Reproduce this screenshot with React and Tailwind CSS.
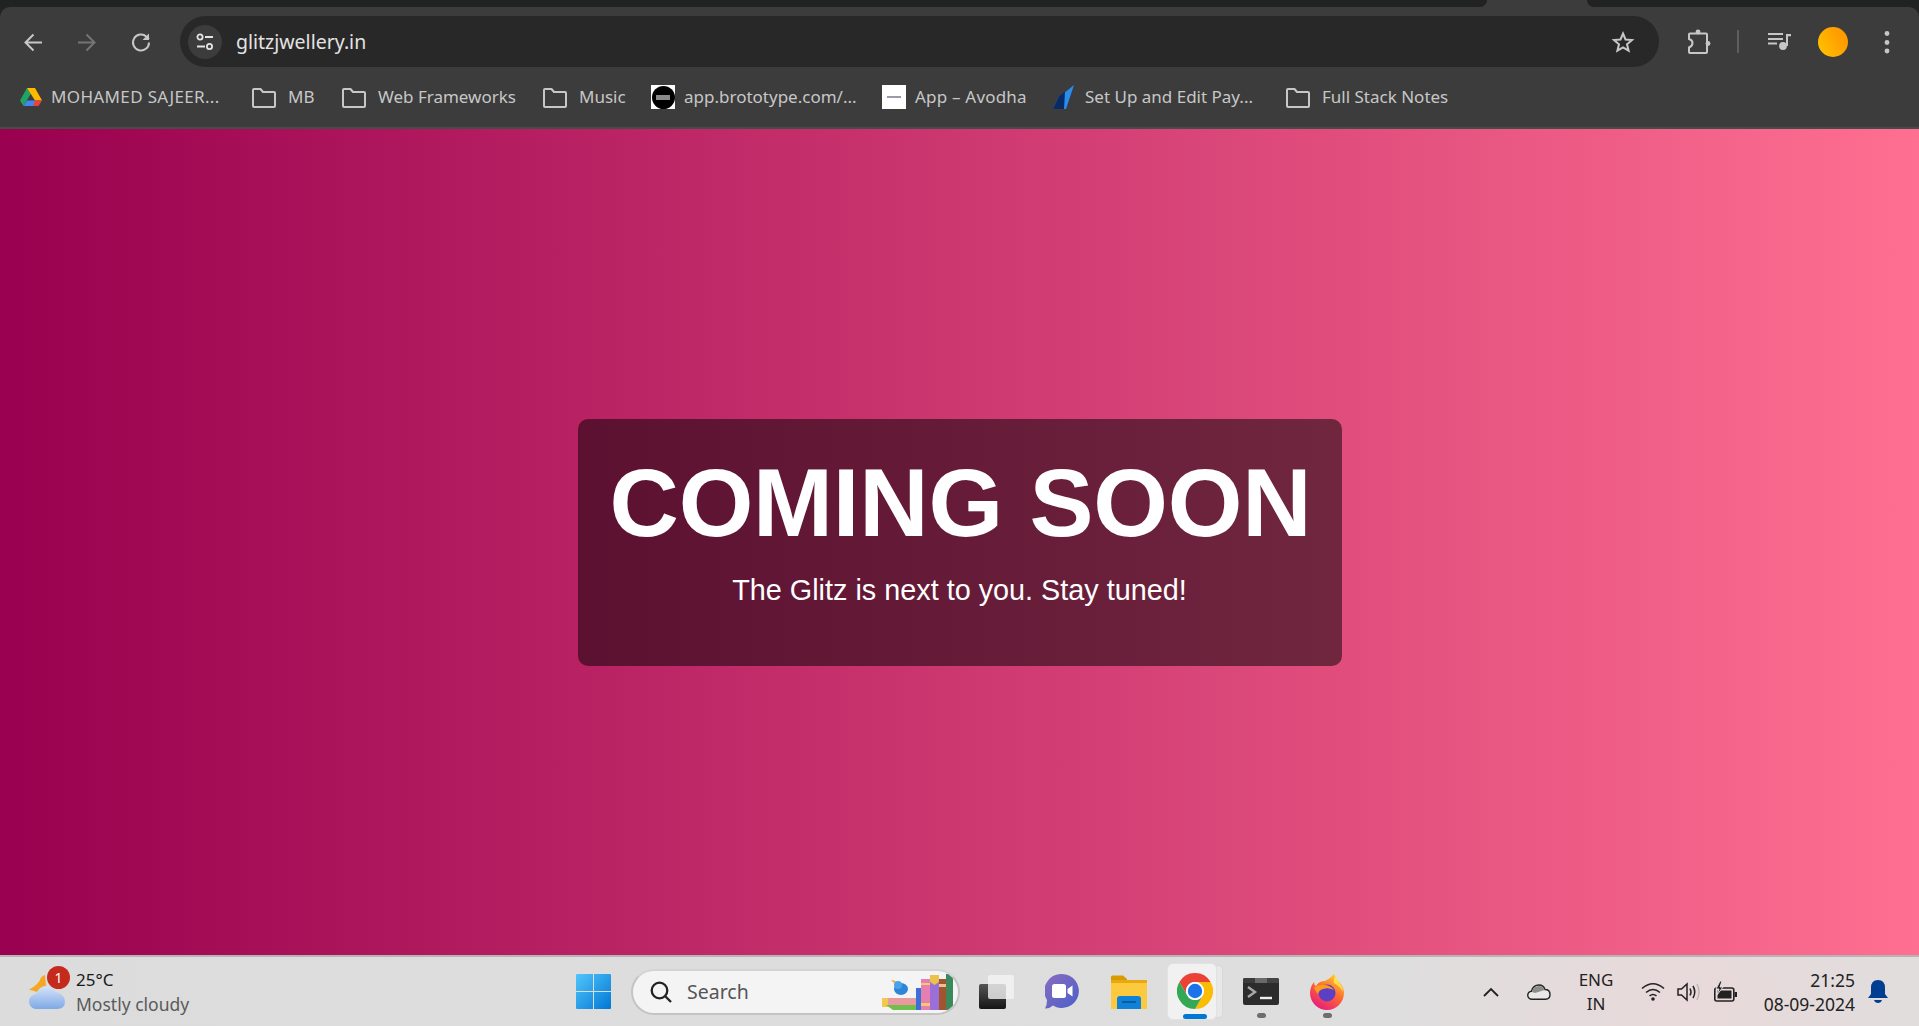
import React from "react";

const ui = "font-['Noto_Sans',sans-serif]";

const Folder = () => (
  <svg width="24" height="24" viewBox="0 0 24 24" fill="none" stroke="#c7c7c7" strokeWidth="2" strokeLinejoin="round" className="shrink-0">
    <path d="M1 5a1 1 0 0 1 1-1h6.500l2.500 3h11a1 1 0 0 1 1 1v13a1 1 0 0 1-1 1H2a1 1 0 0 1-1-1z" />
  </svg>
);

const Drive = () => (
  <svg width="24" height="24" viewBox="0 0 24 24" className="shrink-0">
    <path d="M8 3 1 15.500 4.500 21 12 8.500z" fill="#1fa463" />
    <path d="M8 3h8l7 12.500h-7z" fill="#ffba00" />
    <path d="M4.500 21 8 15.500h10L15 21z" fill="#4285f4" />
    <path d="M16 15.500h7L19.500 21H14z" fill="#ea4335" />
  </svg>
);

const Bookmark = ({ icon, label, w, className, textClass = "" }) => (
  <div className={`flex items-center shrink-0 ${className}`}>
    {icon}
    <span className={`text-[17px] text-[#c7c7c7] whitespace-nowrap ${textClass} ${ui}`} style={{ width: w }}>{label}</span>
  </div>
);

function Toolbar() {
  return (
    <div className="h-[122px] bg-[#3c3c3c] rounded-t-[10px] flex flex-col border-b-2 border-[#4a4a4a] shrink-0">
      <div className="flex items-center pt-[9px] h-[60px] shrink-0">
        <svg width="24" height="24" viewBox="0 0 24 24" fill="none" stroke="#c7c7c7" strokeWidth="2" className="ml-[21px] shrink-0"><path d="M21 12.500H4.500M12.500 4.500l-8 8 8 8" /></svg>
        <svg width="24" height="24" viewBox="0 0 24 24" fill="none" stroke="#757575" strokeWidth="2" className="ml-[30px] shrink-0"><path d="M3 12.500h16.500M11.500 4.500l8 8-8 8" /></svg>
        <svg width="24" height="24" viewBox="0 0 24 24" fill="none" stroke="#c7c7c7" strokeWidth="2" className="ml-[30px] shrink-0"><path d="M20 12.500a8 8 0 1 1-2.500-5.800L20 9" /><path d="M20 3.500V10h-6.500" fill="#c7c7c7" stroke="none" /></svg>
        <div className="ml-[27px] w-[1479px] h-[51px] rounded-full bg-[#282828] flex items-center pl-2 pr-6 shrink-0">
          <div className="w-[34px] h-[34px] rounded-full bg-[#3c3c3c] flex items-center justify-center shrink-0">
            <svg width="20" height="20" viewBox="0 0 20 20" fill="none" stroke="#e3e3e3" strokeWidth="1.800">
              <circle cx="5" cy="5" r="2.600" /><path d="M10 5h8M2 14.500h8" /><circle cx="14.500" cy="14.500" r="2.600" />
            </svg>
          </div>
          <span className={`ml-[14px] pt-[1px] text-[19.500px] text-[#e3e3e3] ${ui}`}>glitzjwellery.in</span>
          <svg width="24" height="24" viewBox="0 0 24 24" fill="none" stroke="#c7c7c7" strokeWidth="2" strokeLinejoin="miter" className="ml-auto"><path d="M12 3.500l2.500 6 6.500.5-5 4.300 1.600 6.400L12 17.300 6.400 20.700 8 14.300 3 10l6.500-.5z" /></svg>
        </div>
        <svg width="24" height="26" viewBox="0 0 24 26" fill="none" stroke="#c7c7c7" strokeWidth="2" className="ml-[28px] shrink-0">
          <path d="M2 5.500a1 1 0 0 1 1-1h16a1 1 0 0 1 1 1V23a1 1 0 0 1-1 1H3a1 1 0 0 1-1-1v-4.500q3.500-1.500 3.500-4.500T2 10z" />
          <circle cx="11" cy="3" r="2.400" fill="#c7c7c7" stroke="none" /><circle cx="21" cy="14.500" r="2.400" fill="#c7c7c7" stroke="none" />
        </svg>
        <div className="ml-[26px] w-[2px] h-[23px] bg-[#5e5e5e] shrink-0" />
        <svg width="24" height="24" viewBox="0 0 24 24" fill="#c7c7c7" className="ml-[28px] shrink-0">
          <path d="M1 3h15v2H1zM1 8h15v2H1zM1 12.500h9v2H1zM19 4h5v2.200h-3V16h-2z" /><circle cx="16" cy="16" r="3.900" />
        </svg>
        <div className="ml-[27px] w-[30px] h-[30px] rounded-full bg-[linear-gradient(240deg,#ff9500,#ffa000_35%,#ffc800)] shrink-0" />
        <svg width="24" height="24" viewBox="0 0 24 24" fill="#c7c7c7" className="ml-[27px] shrink-0"><circle cx="12" cy="3.500" r="2.400" /><circle cx="12" cy="12.500" r="2.400" /><circle cx="12" cy="21" r="2.400" /></svg>
      </div>
      <div className="flex items-center flex-1 pl-[19px]">
        <Bookmark icon={<Drive />} label="MOHAMED SAJEER..." w={167} className="gap-[8px]" textClass="tracking-[0.35px]" />
        <Bookmark icon={<Folder />} label="MB" w={26} className="ml-[34px] gap-[12px]" />
        <Bookmark icon={<Folder />} label="Web Frameworks" w={137} className="ml-[28px] gap-[12px]" />
        <Bookmark icon={<Folder />} label="Music" w={47} className="ml-[28px] gap-[12px]" />
        <Bookmark
          icon={
            <div className="w-6 h-6 bg-white shrink-0 flex items-center justify-center">
              <div className="w-[23px] h-[23px] rounded-full bg-black flex items-center justify-center"><div className="w-[14px] h-[5px] bg-[#8a8a8a]" /></div>
            </div>
          }
          label="app.brototype.com/..."
          w={172}
          className="ml-[25px] gap-[9px]"
        />
        <Bookmark
          icon={<div className="w-6 h-6 bg-white shrink-0 flex items-center justify-center"><div className="w-[14px] h-[2px] bg-[#9a9aa8]" /></div>}
          label="App – Avodha"
          w={112}
          className="ml-[26px] gap-[9px]"
          textClass="tracking-[0.2px]"
        />
        <Bookmark
          icon={
            <svg width="22" height="24" viewBox="0 0 22 24" className="shrink-0">
              <path d="M21 0 10 9 6 11 0 24h13z" fill="#2b8cf0" />
              <path d="M12 7 6 11 0 24h11z" fill="#0a2a66" />
            </svg>
          }
          label="Set Up and Edit Pay..."
          w={168}
          className="ml-[26px] gap-[10px]"
        />
        <Bookmark icon={<Folder />} label="Full Stack Notes" w={126} className="ml-[33px] gap-[12px]" />
      </div>
    </div>
  );
}

const Weather = () => (
  <div className="relative w-[36px] h-[34px] shrink-0">
    <svg width="36" height="34" viewBox="0 0 36 34">
      <defs>
        <linearGradient id="wc" x1="0" y1="0" x2="0" y2="1"><stop offset="0" stopColor="#d6e4f8" /><stop offset="1" stopColor="#7ea9e6" /></linearGradient>
      </defs>
      <path d="M0 14.500 8 17l9-6-1-11q-4 1-5.500 6Q6 12 0 14.500z" fill="#f5a623" />
      <path d="M8 34a7.500 7.500 0 0 1-1-15Q10 11 17.500 11q7 0 9 6 9.500 2 9.500 9.500 0 7.500-8 7.500z" fill="url(#wc)" />
    </svg>
    <div className="absolute left-[18px] top-[-9px] w-[23px] h-[23px] rounded-full bg-[#c42b1c] flex items-center justify-center text-white text-[14px] font-['Noto_Sans',sans-serif]">1</div>
  </div>
);

const Books = () => (
  <svg width="74" height="36" viewBox="0 0 74 36" className="absolute right-[3px] bottom-[3px]">
    <path d="M1 24h34v9H1z" fill="#f2c94c" />
    <path d="M7 24h28v7H7z" fill="#e89aa0" />
    <path d="M5 31h30v5H12z" fill="#6fbf4a" />
    <ellipse cx="20" cy="15" rx="7" ry="6" fill="#2f86d8" />
    <circle cx="17" cy="11" r="4" fill="#4aa3e8" />
    <path d="M13 9 10 6l5 1z" fill="#f5a623" />
    <path d="M35 14h5v22h-5z" fill="#3d6fd8" />
    <path d="M40 5h9v31h-9z" fill="#e57fb2" /><path d="M40 9h9v2h-9zM40 29h9v3h-9z" fill="#f4c96b" />
    <path d="M49 1h9v35h-9z" fill="#9a6fd8" /><path d="M49 1h9v7l-4.500 3L49 8z" fill="#e9c24c" />
    <path d="M58 5h7v31h-7z" fill="#a2532f" /><path d="M58 10h7v3h-7z" fill="#e9c48c" />
    <path d="M65 0h7v36h-7z" fill="#3c8a5c" />
  </svg>
);

const Chrome = () => (
  <svg width="36" height="36" viewBox="0 0 36 36">
    <path d="M2.410 9A18 18 0 0 1 33.590 9H18A9 9 0 0 0 10.200 22.500Z" fill="#ea4335" />
    <path d="M33.590 9A18 18 0 0 1 18 36L25.800 22.500A9 9 0 0 0 18 9Z" fill="#fbbc04" />
    <path d="M18 36A18 18 0 0 1 2.410 9L10.200 22.500A9 9 0 0 0 25.800 22.500Z" fill="#34a853" />
    <circle cx="18" cy="18" r="9" fill="#fff" /><circle cx="18" cy="18" r="7.200" fill="#1a73e8" />
  </svg>
);

const Firefox = () => (
  <svg width="34" height="36" viewBox="0 0 34 36">
    <defs>
      <linearGradient id="ff" x1="0.800" y1="0" x2="0.200" y2="1"><stop offset="0" stopColor="#ffd52e" /><stop offset="0.450" stopColor="#ff6a2e" /><stop offset="1" stopColor="#e31587" /></linearGradient>
    </defs>
    <path d="M24 0q1 5 6 9 4 5 4 10a17 17 0 1 1-34 0q0-6 4-11 0 3 2 4 3-5 9-5 5-2 9-7z" fill="url(#ff)" />
    <path d="M26 1q0 5 4 9 3 4 3 8-3-6-9-9-1-4 2-8z" fill="#ffe04a" />
    <circle cx="17" cy="19" r="8.500" fill="#5b3fc4" />
    <path d="M4 14q4-4 10-3 6 0 10 5-6-3-11-1-4 1-5 5-2-2-4-6z" fill="#ff9a1f" />
  </svg>
);

function Taskbar() {
  return (
    <div className={`h-[71px] shrink-0 border-t-2 border-[#b5b5b5] bg-[radial-gradient(circle_at_88%_60%,#e9d9da,#dedede_18%,#dcdcdc)] flex items-center pl-[29px] ${ui}`}>
      <Weather />
      <div className="ml-[11px] w-[113px] shrink-0 flex flex-col leading-[24px] whitespace-nowrap">
        <span className="text-[17px] text-[#1a1a1a]">25°C</span>
        <span className="text-[17.500px] text-[#5a5a5a]">Mostly cloudy</span>
      </div>
      <svg width="35" height="35" viewBox="0 0 35 35" className="ml-[387px] shrink-0">
        <defs>
          <linearGradient id="w1" x1="0" y1="0" x2="1" y2="1"><stop offset="0" stopColor="#52c5fb" /><stop offset="1" stopColor="#0078d4" /></linearGradient>
        </defs>
        <path d="M1 0h16v17H0V1a1 1 0 0 1 1-1zM18 0h16a1 1 0 0 1 1 1v16H18zM0 18h17v17H1a1 1 0 0 1-1-1zM18 18h17v16a1 1 0 0 1-1 1H18z" fill="url(#w1)" />
      </svg>
      <div className="relative ml-[20px] w-[329px] h-[46px] shrink-0 rounded-full bg-[#f4f4f4] border-2 border-[#c4c4c4] border-t-[#d4d4d4] overflow-hidden flex items-center pl-[16px]">
        <svg width="24" height="24" viewBox="0 0 24 24" fill="none" stroke="#222" strokeWidth="2.300"><circle cx="10.500" cy="10.500" r="7.800" /><path d="m16 16 6 6" /></svg>
        <span className="ml-[14px] text-[19.500px] text-[#555]">Search</span>
        <Books />
      </div>
      <div className="relative ml-[19px] w-[36px] h-[34px] shrink-0">
        <div className="absolute left-0 top-[9px] w-[27px] h-[25px] rounded-[2px] bg-[linear-gradient(#555,#151515)]" />
        <div className="absolute left-[9px] top-0 w-[26px] h-[24px] rounded-[2px] bg-[#f4f4f4]/80" />
      </div>
      <svg width="34" height="36" viewBox="0 0 34 36" className="ml-[30px] shrink-0">
        <defs>
          <linearGradient id="ch" x1="0" y1="0" x2="1" y2="1"><stop offset="0" stopColor="#8a6cc0" /><stop offset="1" stopColor="#4a60c8" /></linearGradient>
        </defs>
        <path d="M17 0a17 17 0 1 1-9 31.500Q4 35 0 34.500q2-3 2-8.500A17 17 0 0 1 17 0z" fill="url(#ch)" />
        <rect x="7" y="10" width="14" height="14" rx="2.500" fill="#fff" /><path d="m22.500 15 5-3.500v11l-5-3.500z" fill="#fff" />
      </svg>
      <svg width="36" height="34" viewBox="0 0 36 34" className="ml-[32px] shrink-0">
        <path d="M0 2a1.500 1.500 0 0 1 1.500-1.500H12L16 4v3H0z" fill="#d99a00" />
        <path d="M0 5h36v29H0z" fill="#fcc93f" />
        <path d="M0 5h36v3H0z" fill="#e8a80f" />
        <path d="M6 34V24a3 3 0 0 1 3-3h18a3 3 0 0 1 3 3v10z" fill="#0f82d8" />
        <path d="M11 26h14v2H11z" fill="#0a5ba6" />
      </svg>
      <div className="relative ml-[20px] w-[50px] h-[57px] shrink-0 rounded-[6px] bg-[#f1f1f1] border border-[#e2e2e2] flex items-center pl-[9px] pb-[2px]">
        <div className="absolute right-[-7px] top-[1px] w-[6px] h-[53px] rounded-r-[5px] bg-[#e8e8e8] border border-l-0 border-[#d8d8d8]" />
        <Chrome />
        <div className="absolute left-[15px] bottom-[0px] w-[24px] h-[5px] rounded-full bg-[#0078d4]" />
      </div>
      <div className="relative ml-[26px] w-[36px] h-[27px] shrink-0 rounded-[2px] bg-[#2c2c2c] overflow-visible">
        <div className="flex h-[5px]"><div className="flex-1 bg-[#3c3c3c] rounded-tl-[2px]" /><div className="flex-1 bg-[#6a6a6a]" /><div className="flex-1 bg-[#444] rounded-tr-[2px]" /></div>
        <svg width="36" height="22" viewBox="0 0 36 22" fill="none" strokeWidth="2.400"><path d="m5 4 7 5-7 5" stroke="#a8a8a8" /><path d="M17 15h12" stroke="#eee" /></svg>
        <div className="absolute left-[14px] top-[35px] w-[9px] h-[5px] rounded-full bg-[#6e6e6e]" />
      </div>
      <div className="relative ml-[31px] w-[34px] h-[36px] shrink-0">
        <Firefox />
        <div className="absolute left-[13px] top-[39px] w-[9px] h-[5px] rounded-full bg-[#6e6e6e]" />
      </div>
      <svg width="16" height="10" viewBox="0 0 16 10" fill="none" stroke="#222" strokeWidth="1.800" className="ml-[139px] shrink-0"><path d="m1 9 7-7 7 7" /></svg>
      <svg width="24" height="16" viewBox="0 0 24 16" className="ml-[28px] shrink-0">
        <path d="M5 15.200a4 4 0 0 1-.5-8Q6 1 12 1q4.500 0 6 4.500 5 0 5 5 0 4.700-4.500 4.700z" fill="#e8e8e8" stroke="#222" strokeWidth="1.400" />
        <path d="M5 8Q6 2 12 2q4 0 5.500 4L8 9z" fill="#8c8c8c" />
      </svg>
      <div className="ml-[28px] w-[34px] shrink-0 flex flex-col items-center text-[17px] leading-[24px] text-[#222]"><span>ENG</span><span>IN</span></div>
      <svg width="24" height="20" viewBox="0 0 24 20" fill="none" stroke="#222" strokeWidth="1.600" className="ml-[28px] shrink-0">
        <path d="M1 6.500Q12-3 23 6.500M5 10.500q7-6 14 0M8.500 14q3.500-3 7 0" /><circle cx="12" cy="17" r="1.800" fill="#222" stroke="none" />
      </svg>
      <svg width="23" height="20" viewBox="0 0 23 20" fill="none" stroke="#222" strokeWidth="1.500" className="ml-[12px] shrink-0">
        <path d="M1 7v6h3.500L10 18V2L4.500 7z" /><path d="M13 6.500q2 3.500 0 7M16 4q3.500 6 0 12" /><path d="M20 2q4 8 0 16" stroke="#b8b8b8" />
      </svg>
      <svg width="24" height="22" viewBox="0 0 24 22" className="ml-[13px] shrink-0">
        <rect x="1.800" y="7" width="19" height="13" rx="2" fill="none" stroke="#222" strokeWidth="1.600" />
        <rect x="4.500" y="9.500" width="14" height="8" fill="#222" />
        <rect x="21.500" y="11" width="2.500" height="5" fill="#222" />
        <path d="M7 0 3 8h3L4 14l6-8H7l2-6z" fill="#222" stroke="#dcdcdc" strokeWidth="1" />
      </svg>
      <div className="ml-[25px] w-[93px] shrink-0 flex flex-col items-end text-[17.500px] leading-[24px] text-[#222] whitespace-nowrap"><span>21:25</span><span>08-09-2024</span></div>
      <svg width="20" height="24" viewBox="0 0 20 24" className="ml-[13px] shrink-0" fill="#003e92">
        <path d="M10 0q7 0 7 8v6l3 4H0l3-4V8q0-8 7-8z" /><path d="M6 20h8q-1 3-4 3t-4-3z" />
      </svg>
    </div>
  );
}

export default function App() {
  return (
    <div className="h-screen w-full flex flex-col overflow-hidden bg-[#202322]">
      <div className="h-[7px] shrink-0 relative bg-[#3c3c3c]">
        <div className="absolute left-0 top-0 h-[7px] w-[1487px] bg-[#202322] rounded-br-[8px]" />
        <div className="absolute right-0 top-0 h-[7px] w-[332px] bg-[#202322] rounded-bl-[8px]" />
      </div>
      <Toolbar />
      <main className="flex-1 flex items-center justify-center bg-[linear-gradient(to_right,#99004f,#ff6f91)] font-['Liberation_Sans',sans-serif]">
        <div className="w-[764px] rounded-[10px] bg-black/50 px-8 pt-[29px] pb-[59px] text-center text-white">
          <h1 className="text-[96px] font-bold leading-[110px] whitespace-nowrap tracking-[-0.2px]">COMING SOON</h1>
          <p className="mt-4 text-[28.800px] leading-[33px]">The Glitz is next to you. Stay tuned!</p>
        </div>
      </main>
      <Taskbar />
    </div>
  );
}
